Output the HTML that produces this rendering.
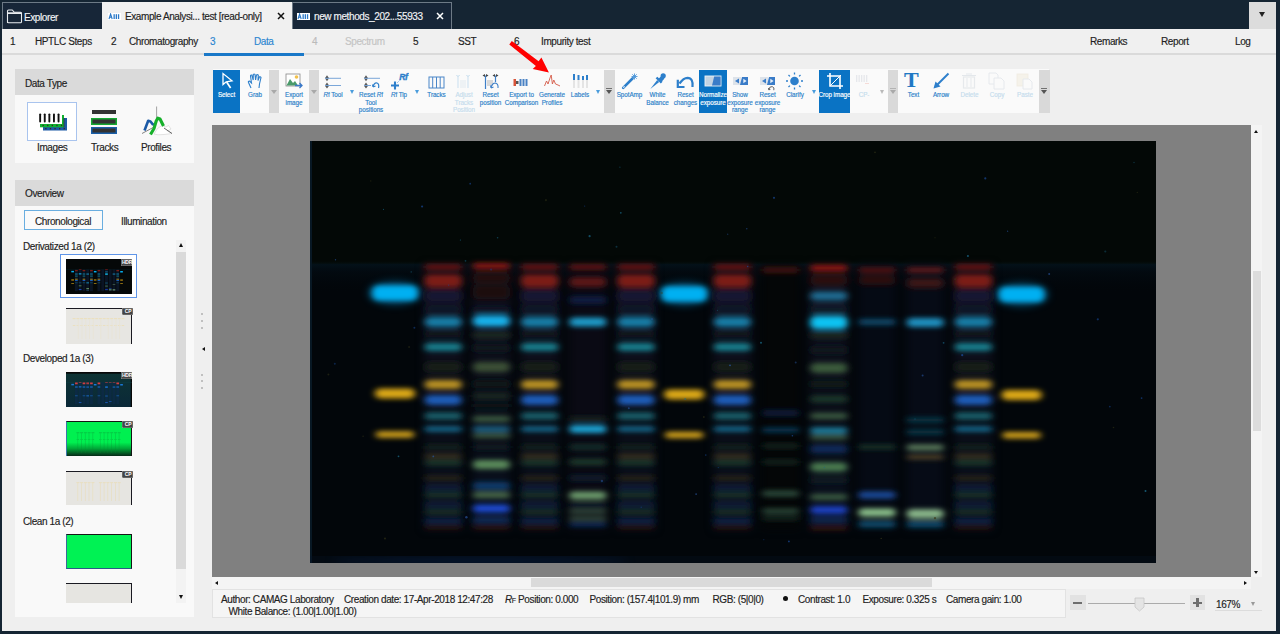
<!DOCTYPE html><html><head><meta charset="utf-8"><title>HPTLC</title><style>
*{margin:0;padding:0;box-sizing:border-box}
html,body{width:1280px;height:634px;overflow:hidden}
body{background:#152533;position:relative;font-family:"Liberation Sans",sans-serif;font-size:10px;color:#3a3a3a;letter-spacing:-0.4px;-webkit-text-stroke:0.15px}
.a{position:absolute;white-space:nowrap}
.tb{position:absolute;font-size:6.3px;line-height:7.5px;color:#2a7fc9;text-align:center;letter-spacing:-0.05px;white-space:nowrap}
.tb.w{color:#fff}
.tb.d{color:#c5dced}
.sep{position:absolute;top:70px;height:43px;width:10px;background:#d9d9d9}
.dd{position:absolute;width:0;height:0;border-left:2.6px solid transparent;border-right:2.6px solid transparent;border-top:4px solid #4a9cdc}
</style></head><body>
<div class="a" style="left:2px;top:2px;width:100px;height:27px;background:#172638;border-top:1px solid #6d7a86;border-left:1px solid #6d7a86"></div>
<svg class="a" style="left:6px;top:9px" width="17" height="15" viewBox="0 0 17 15"><path d="M1.5 13.5 V2 Q1.5 1 2.5 1 H6.3 L8.3 3.3 H14.5 Q15.5 3.3 15.5 4.3 V12.8 Q15.5 13.8 14.5 13.8 H2.5 Q1.5 13.8 1.5 12.8 Z" fill="none" stroke="#e8ecef" stroke-width="1.1" stroke-linejoin="round"/><rect x="1.5" y="3.3" width="14" height="1.7" fill="#e8ecef"/></svg>
<div class="a" style="left:24px;top:11.5px;color:#f2f4f6;font-size:10px">Explorer</div>
<div class="a" style="left:102px;top:2px;width:190px;height:27px;background:#f0f0f0"></div>
<svg class="a" style="left:108px;top:13px" width="13" height="7" viewBox="0 0 13 7"><rect width="13" height="7" fill="#fff"/><path d="M1 6 L2.6 1 L4.2 6 M1.7 4.3 H3.5" fill="none" stroke="#2a78c8" stroke-width="1.1"/><g fill="#2a78c8"><rect x="5.5" y="1.2" width="1.3" height="4.8"/><rect x="7.7" y="1.2" width="1.3" height="4.8"/><rect x="9.9" y="1.2" width="1.3" height="4.8"/></g></svg>
<div class="a" style="left:125px;top:11px;color:#222">Example Analysi... test [read-only]</div>
<svg class="a" style="left:277px;top:12px" width="8" height="8" viewBox="0 0 8 8"><path d="M1 1L7 7M7 1L1 7" stroke="#111" stroke-width="1.5"/></svg>
<div class="a" style="left:292px;top:2px;width:160px;height:27px;background:#172638;border:1px solid #6d7a86;border-bottom:none"></div>
<svg class="a" style="left:297px;top:12.5px" width="13" height="7" viewBox="0 0 13 7"><rect width="13" height="7" fill="#fff"/><path d="M1 6 L2.6 1 L4.2 6 M1.7 4.3 H3.5" fill="none" stroke="#2a78c8" stroke-width="1.1"/><g fill="#2a78c8"><rect x="5.5" y="1.2" width="1.3" height="4.8"/><rect x="7.7" y="1.2" width="1.3" height="4.8"/><rect x="9.9" y="1.2" width="1.3" height="4.8"/></g></svg>
<div class="a" style="left:314px;top:11px;color:#f2f4f6">new methods_202...55933</div>
<svg class="a" style="left:436px;top:12px" width="8" height="8" viewBox="0 0 8 8"><path d="M1 1L7 7M7 1L1 7" stroke="#fff" stroke-width="1.5"/></svg>
<div class="a" style="left:1249px;top:2px;width:27px;height:27px;background:#dcdcdc"></div>
<div class="a" style="left:1259px;top:12px;width:0;height:0;border-left:3px solid transparent;border-right:3px solid transparent;border-top:5px solid #222"></div>
<div class="a" style="left:2px;top:29px;width:1274px;height:602px;background:#efefef"></div>
<div class="a" style="left:2px;top:29px;width:1274px;height:25px;background:#f0f0f0"></div>
<div class="a" style="left:2px;top:53px;width:1274px;height:2px;background:#dadada"></div>
<div class="a" style="left:204px;top:53px;width:100px;height:3px;background:#1a78c8"></div>
<div class="a" style="left:10px;top:35.5px;color:#222">1</div>
<div class="a" style="left:35px;top:35.5px;color:#222">HPTLC Steps</div>
<div class="a" style="left:111px;top:35.5px;color:#222">2</div>
<div class="a" style="left:129px;top:35.5px;color:#222">Chromatography</div>
<div class="a" style="left:210px;top:35.5px;color:#2a86d0">3</div>
<div class="a" style="left:254px;top:35.5px;color:#2a86d0">Data</div>
<div class="a" style="left:312px;top:35.5px;color:#bbb">4</div>
<div class="a" style="left:345px;top:35.5px;color:#c4c4c4">Spectrum</div>
<div class="a" style="left:413px;top:35.5px;color:#222">5</div>
<div class="a" style="left:458px;top:35.5px;color:#222">SST</div>
<div class="a" style="left:514px;top:35.5px;color:#222">6</div>
<div class="a" style="left:541px;top:35.5px;color:#222">Impurity test</div>
<div class="a" style="left:1090px;top:35.5px;color:#222">Remarks</div>
<div class="a" style="left:1161px;top:35.5px;color:#222">Report</div>
<div class="a" style="left:1235px;top:35.5px;color:#222">Log</div>
<div class="a" style="left:15px;top:69px;width:179px;height:26px;background:#dadada"></div>
<div class="a" style="left:25px;top:77.5px;color:#222">Data Type</div>
<div class="a" style="left:15px;top:95px;width:179px;height:68px;background:#f9f9f9"></div>
<div class="a" style="left:27px;top:102px;width:50px;height:39px;background:#fff;border:1px solid #a9c4ee"></div>
<svg class="a" style="left:38px;top:110px" width="32" height="24" viewBox="0 0 32 24">
<rect x="5" y="8" width="24" height="12.5" fill="#1c5aa6"/>
<rect x="2" y="5" width="24" height="12.3" fill="#10b030"/>
<rect x="0" y="2" width="24" height="12" fill="#fff"/>
<rect x="25.6" y="8" width="0.8" height="9.5" fill="#333"/>
<g fill="#111"><rect x="1.2" y="3.4" width="1.9" height="9" rx="0.9"/><rect x="5.8" y="3.4" width="1.9" height="9" rx="0.9"/><rect x="10.4" y="3.4" width="1.9" height="9" rx="0.9"/><rect x="15" y="3.4" width="1.9" height="9" rx="0.9"/><rect x="19.6" y="3.4" width="1.9" height="9" rx="0.9"/></g>
<g fill="#3a2626"><rect x="4.5" y="14.8" width="1.3" height="1.3"/><rect x="9.1" y="14.8" width="1.3" height="1.3"/><rect x="13.7" y="14.8" width="1.3" height="1.3"/><rect x="18.3" y="14.8" width="1.3" height="1.3"/><rect x="22.9" y="14.8" width="1.3" height="1.3"/>
<rect x="7.2" y="18" width="1.3" height="1.3"/><rect x="11.8" y="18" width="1.3" height="1.3"/><rect x="16.4" y="18" width="1.3" height="1.3"/><rect x="21" y="18" width="1.3" height="1.3"/><rect x="25.6" y="18" width="1.3" height="1.3"/></g>
</svg>
<div class="a" style="left:37px;top:142px;color:#222">Images</div>
<svg class="a" style="left:90px;top:108px" width="30" height="28" viewBox="0 0 30 28">
<rect x="2" y="2" width="24" height="4" fill="#333"/>
<rect x="1" y="10" width="26" height="7" fill="#16a832"/><rect x="2.5" y="11.5" width="23" height="4" fill="#333"/>
<rect x="1" y="19" width="26" height="7" fill="#1a5fa8"/><rect x="2.5" y="20.5" width="23" height="4" fill="#333"/>
</svg>
<div class="a" style="left:91px;top:142px;color:#222">Tracks</div>
<svg class="a" style="left:140px;top:106px" width="34" height="32" viewBox="0 0 34 32">
<line x1="16.6" y1="0.5" x2="16.6" y2="17" stroke="#999" stroke-width="0.9"/>
<path d="M14 28 L17.5 22.5 L22 19.5 L26 21 L28.5 19.5 L31 23 L27.5 25 L32 27.5 L24 28.5 L18 28.8 Z" fill="#fff" stroke="#d0d0d0" stroke-width="0.6"/>
<line x1="2" y1="27.5" x2="15" y2="20.5" stroke="#666" stroke-width="0.8"/>
<line x1="24" y1="22" x2="32" y2="27.5" stroke="#555" stroke-width="0.9"/>
<path d="M4.5 24.5 L8.2 14.8 L10.5 15.5 L12.8 18.3 L15.5 18.8" fill="none" stroke="#1c5aa6" stroke-width="2.6" stroke-linejoin="round"/>
<path d="M10.5 28.5 L14 22.5 L16.2 15 L17.8 12.2 L20 13 L23.5 20" fill="none" stroke="#16b02a" stroke-width="3.1" stroke-linejoin="round"/>
</svg>
<div class="a" style="left:141px;top:142px;color:#222">Profiles</div>
<div class="a" style="left:15px;top:180px;width:179px;height:26px;background:#dadada"></div>
<div class="a" style="left:25px;top:187.5px;color:#222">Overview</div>
<div class="a" style="left:15px;top:206px;width:179px;height:411px;background:#f9f9f9"></div>
<div class="a" style="left:24px;top:210px;width:79px;height:20px;border:1px solid #6aaee0;background:#fafafa"></div>
<div class="a" style="left:35px;top:215.5px;color:#222">Chronological</div>
<div class="a" style="left:121px;top:215.5px;color:#222">Illumination</div>
<div class="a" style="left:176px;top:240px;width:10px;height:363px;background:#f3f3f3"></div>
<div class="a" style="left:176px;top:252px;width:10px;height:317px;background:#dadada"></div>
<div class="a" style="left:178.5px;top:243px;width:0;height:0;border-left:2.5px solid transparent;border-right:2.5px solid transparent;border-bottom:4px solid #111"></div>
<div class="a" style="left:178.5px;top:595px;width:0;height:0;border-left:2.5px solid transparent;border-right:2.5px solid transparent;border-top:4px solid #111"></div>
<div class="a" style="left:23px;top:240.5px;color:#222">Derivatized 1a (2)</div>
<div class="a" style="left:23px;top:353px;color:#222">Developed 1a (3)</div>
<div class="a" style="left:23px;top:516px;color:#222">Clean 1a (2)</div>
<div class="a" style="left:60px;top:254px;width:77px;height:44px;border:1.5px solid #5f95e8;background:#fff"></div>
<svg class="a" style="left:66px;top:259px" width="66" height="35" viewBox="310 141 846 422" preserveAspectRatio="none"><rect x="310" y="141" width="846" height="422" fill="#050808"/><rect x="424" y="265" width="38" height="264" fill="#0a1424"/><rect x="472" y="265" width="38" height="264" fill="#0a1424"/><rect x="521" y="265" width="38" height="264" fill="#0a1424"/><rect x="569" y="265" width="38" height="264" fill="#0a1424"/><rect x="617" y="265" width="38" height="264" fill="#0a1424"/><rect x="713" y="265" width="38" height="264" fill="#0a1424"/><rect x="762" y="265" width="38" height="264" fill="#0a1424"/><rect x="810" y="265" width="38" height="264" fill="#0a1424"/><rect x="858" y="265" width="38" height="264" fill="#0a1424"/><rect x="906" y="265" width="38" height="264" fill="#0a1424"/><rect x="954" y="265" width="38" height="264" fill="#0a1424"/><rect x="310" y="262" width="846" height="6" fill="#061a20"/><g><rect x="378" y="284" width="34" height="18" fill="#06b0f2"/><rect x="378" y="388" width="34" height="12" fill="#dca818"/><rect x="378" y="431" width="34" height="8" fill="#d0a01a"/><rect x="667" y="285" width="34" height="18" fill="#06b0f2"/><rect x="667" y="388" width="34" height="12" fill="#dca818"/><rect x="667" y="431" width="34" height="8" fill="#d0a01a"/><rect x="1005" y="286" width="34" height="18" fill="#06b0f2"/><rect x="1005" y="389" width="34" height="12" fill="#dca818"/><rect x="1005" y="431" width="34" height="8" fill="#d0a01a"/><rect x="426" y="273" width="34" height="16" fill="#7c1c14"/><rect x="426" y="316" width="34" height="12" fill="#137ca4"/><rect x="426" y="342" width="34" height="10" fill="#157e8c"/><rect x="426" y="379" width="34" height="11" fill="#b89020"/><rect x="426" y="394" width="34" height="12" fill="#1a5cb8"/><rect x="426" y="426" width="34" height="6" fill="#166e94"/><rect x="523" y="273" width="34" height="16" fill="#7c1c14"/><rect x="523" y="316" width="34" height="12" fill="#137ca4"/><rect x="523" y="342" width="34" height="10" fill="#157e8c"/><rect x="523" y="379" width="34" height="11" fill="#b89020"/><rect x="523" y="394" width="34" height="12" fill="#1a5cb8"/><rect x="523" y="426" width="34" height="6" fill="#166e94"/><rect x="619" y="273" width="34" height="16" fill="#7c1c14"/><rect x="619" y="316" width="34" height="12" fill="#137ca4"/><rect x="619" y="342" width="34" height="10" fill="#157e8c"/><rect x="619" y="379" width="34" height="11" fill="#b89020"/><rect x="619" y="394" width="34" height="12" fill="#1a5cb8"/><rect x="619" y="426" width="34" height="6" fill="#166e94"/><rect x="715" y="273" width="34" height="16" fill="#7c1c14"/><rect x="715" y="316" width="34" height="12" fill="#137ca4"/><rect x="715" y="342" width="34" height="10" fill="#157e8c"/><rect x="715" y="379" width="34" height="11" fill="#b89020"/><rect x="715" y="394" width="34" height="12" fill="#1a5cb8"/><rect x="715" y="426" width="34" height="6" fill="#166e94"/><rect x="956" y="273" width="34" height="16" fill="#7c1c14"/><rect x="956" y="316" width="34" height="12" fill="#137ca4"/><rect x="956" y="342" width="34" height="10" fill="#157e8c"/><rect x="956" y="379" width="34" height="11" fill="#b89020"/><rect x="956" y="394" width="34" height="12" fill="#1a5cb8"/><rect x="956" y="426" width="34" height="6" fill="#166e94"/><rect x="474" y="262" width="34" height="7" fill="#8a1410"/><rect x="474" y="314" width="34" height="13" fill="#16b0ea"/><rect x="474" y="426" width="34" height="6" fill="#1a6a90"/><rect x="474" y="459" width="34" height="11" fill="#5a8a5a"/><rect x="474" y="504" width="34" height="10" fill="#1a4ad0"/><rect x="571" y="317" width="34" height="11" fill="#1a9ac8"/><rect x="571" y="424" width="34" height="10" fill="#1aa0d0"/><rect x="571" y="491" width="34" height="10" fill="#6a9a6a"/><rect x="571" y="510" width="34" height="3" fill="#50785a"/><rect x="571" y="517" width="34" height="3" fill="#50785a"/><rect x="571" y="523" width="34" height="4" fill="#0a3a7a"/><rect x="812" y="264" width="34" height="7" fill="#921410"/><rect x="812" y="291" width="34" height="11" fill="#1a6a90"/><rect x="812" y="315" width="34" height="16" fill="#10c2f2"/><rect x="812" y="427" width="34" height="7" fill="#1a80a0"/><rect x="812" y="462" width="34" height="11" fill="#4a7a50"/><rect x="812" y="505" width="34" height="10" fill="#1a40c0"/><rect x="860" y="491" width="34" height="8" fill="#1a4a9a"/><rect x="860" y="508" width="34" height="10" fill="#8ac08a"/><rect x="908" y="317" width="34" height="11" fill="#1a90c0"/><rect x="908" y="444" width="34" height="7" fill="#5a7a5a"/><rect x="908" y="508" width="34" height="11" fill="#8ab88a"/></g></svg>
<svg class="a" style="left:121px;top:259px" width="11" height="7" viewBox="0 0 11 7"><path d="M1.5 0 H11 V7 H1.5 Q0 7 0 5.5 V1.5 Q0 0 1.5 0Z" fill="#444" stroke="#bbb" stroke-width="0.6"/><text x="6" y="5.3" font-family="Liberation Sans" font-weight="bold" font-size="5" fill="#fff" text-anchor="middle" letter-spacing="-0.2">HDR</text></svg>
<div class="a" style="left:66px;top:308px;width:66px;height:36px;background:#e7e6e2;border-top:1.5px solid #1a1a22;border-right:1.5px solid #1a1a22"></div>
<svg class="a" style="left:66px;top:308px" width="66" height="36" viewBox="0 0 66 36"><g fill="#ebe0c0"><rect x="6.6" y="10" width="3" height="1.2"/><rect x="6.8" y="17" width="2.5" height="1"/><rect x="10.4" y="10" width="3" height="1.2"/><rect x="10.6" y="17" width="2.5" height="1"/><rect x="14.1" y="10" width="3" height="1.2"/><rect x="14.3" y="17" width="2.5" height="1"/><rect x="17.9" y="10" width="3" height="1.2"/><rect x="18.1" y="17" width="2.5" height="1"/><rect x="21.6" y="10" width="3" height="1.2"/><rect x="21.8" y="17" width="2.5" height="1"/><rect x="25.4" y="10" width="3" height="1.2"/><rect x="25.6" y="17" width="2.5" height="1"/><rect x="29.2" y="10" width="3" height="1.2"/><rect x="29.4" y="17" width="2.5" height="1"/><rect x="32.9" y="10" width="3" height="1.2"/><rect x="33.1" y="17" width="2.5" height="1"/><rect x="36.7" y="10" width="3" height="1.2"/><rect x="36.9" y="17" width="2.5" height="1"/><rect x="40.4" y="10" width="3" height="1.2"/><rect x="40.6" y="17" width="2.5" height="1"/><rect x="44.2" y="10" width="3" height="1.2"/><rect x="44.4" y="17" width="2.5" height="1"/><rect x="48.0" y="10" width="3" height="1.2"/><rect x="48.2" y="17" width="2.5" height="1"/><rect x="51.7" y="10" width="3" height="1.2"/><rect x="51.9" y="17" width="2.5" height="1"/><rect x="55.5" y="10" width="3" height="1.2"/><rect x="55.7" y="17" width="2.5" height="1"/></g><g fill="#e8e4d8"><rect x="11.8" y="11" width="1" height="20"/><rect x="15.5" y="11" width="1" height="20"/><rect x="19.3" y="11" width="1" height="20"/><rect x="23.0" y="11" width="1" height="20"/><rect x="26.8" y="11" width="1" height="20"/><rect x="34.3" y="11" width="1" height="20"/><rect x="41.8" y="11" width="1" height="20"/><rect x="45.6" y="11" width="1" height="20"/><rect x="49.4" y="11" width="1" height="20"/><rect x="53.1" y="11" width="1" height="20"/></g></svg>
<svg class="a" style="left:122px;top:308px" width="11" height="7" viewBox="0 0 11 7"><path d="M1.5 0 H11 V7 H1.5 Q0 7 0 5.5 V1.5 Q0 0 1.5 0Z" fill="#444" stroke="#bbb" stroke-width="0.6"/><text x="6" y="5.3" font-family="Liberation Sans" font-weight="bold" font-size="5" fill="#fff" text-anchor="middle" letter-spacing="-0.2">CP</text></svg>
<svg class="a" style="left:66px;top:372px" width="66" height="35" viewBox="310 141 846 422" preserveAspectRatio="none"><defs><linearGradient id="dg" x1="0" y1="0" x2="0" y2="1"><stop offset="0" stop-color="#0e3434"/><stop offset="1" stop-color="#0a2838"/></linearGradient></defs><rect x="310" y="141" width="846" height="422" fill="url(#dg)"/><rect x="310" y="141" width="846" height="20" fill="#080808"/><rect x="1140" y="141" width="16" height="422" fill="#080808"/><rect x="310" y="262" width="846" height="5" fill="#0e4048"/><rect x="425" y="265" width="36" height="264" fill="#0c2a44"/><rect x="473" y="265" width="36" height="264" fill="#0c2a44"/><rect x="522" y="265" width="36" height="264" fill="#0c2a44"/><rect x="570" y="265" width="36" height="264" fill="#0c2a44"/><rect x="618" y="265" width="36" height="264" fill="#0c2a44"/><rect x="714" y="265" width="36" height="264" fill="#0c2a44"/><rect x="763" y="265" width="36" height="264" fill="#0c2a44"/><rect x="811" y="265" width="36" height="264" fill="#0c2a44"/><rect x="859" y="265" width="36" height="264" fill="#0c2a44"/><rect x="907" y="265" width="36" height="264" fill="#0c2a44"/><rect x="955" y="265" width="36" height="264" fill="#0c2a44"/><g><rect x="378" y="284" width="34" height="18" fill="#1a78d8"/><rect x="667" y="285" width="34" height="18" fill="#1a78d8"/><rect x="1005" y="286" width="34" height="18" fill="#1a78d8"/><rect x="426" y="264" width="34" height="6" fill="#d04040"/><rect x="426" y="273" width="34" height="16" fill="#d04040"/><rect x="426" y="316" width="34" height="12" fill="#1a78d8"/><rect x="426" y="426" width="34" height="6" fill="#1a78d8"/><rect x="523" y="264" width="34" height="6" fill="#d04040"/><rect x="523" y="273" width="34" height="16" fill="#d04040"/><rect x="523" y="316" width="34" height="12" fill="#1a78d8"/><rect x="523" y="426" width="34" height="6" fill="#1a78d8"/><rect x="619" y="264" width="34" height="6" fill="#d04040"/><rect x="619" y="273" width="34" height="16" fill="#d04040"/><rect x="619" y="316" width="34" height="12" fill="#1a78d8"/><rect x="619" y="426" width="34" height="6" fill="#1a78d8"/><rect x="715" y="264" width="34" height="6" fill="#d04040"/><rect x="715" y="273" width="34" height="16" fill="#d04040"/><rect x="715" y="316" width="34" height="12" fill="#1a78d8"/><rect x="715" y="426" width="34" height="6" fill="#1a78d8"/><rect x="956" y="264" width="34" height="6" fill="#d04040"/><rect x="956" y="273" width="34" height="16" fill="#d04040"/><rect x="956" y="316" width="34" height="12" fill="#1a78d8"/><rect x="956" y="426" width="34" height="6" fill="#1a78d8"/><rect x="474" y="262" width="34" height="7" fill="#d04040"/><rect x="474" y="314" width="34" height="13" fill="#1a78d8"/><rect x="474" y="504" width="34" height="10" fill="#1a5ab8"/><rect x="571" y="264" width="34" height="6" fill="#d04040"/><rect x="571" y="276" width="34" height="12" fill="#d04040"/><rect x="571" y="317" width="34" height="11" fill="#1a78d8"/><rect x="571" y="424" width="34" height="10" fill="#1a78d8"/><rect x="812" y="264" width="34" height="7" fill="#d04040"/><rect x="812" y="315" width="34" height="16" fill="#1a78d8"/><rect x="812" y="427" width="34" height="7" fill="#1a78d8"/><rect x="812" y="505" width="34" height="10" fill="#1a5ab8"/><rect x="860" y="267" width="34" height="6" fill="#d04040"/><rect x="860" y="491" width="34" height="8" fill="#1a5ab8"/><rect x="908" y="267" width="34" height="6" fill="#d04040"/><rect x="908" y="317" width="34" height="11" fill="#1a78d8"/></g></svg>
<svg class="a" style="left:121px;top:372px" width="11" height="7" viewBox="0 0 11 7"><path d="M1.5 0 H11 V7 H1.5 Q0 7 0 5.5 V1.5 Q0 0 1.5 0Z" fill="#444" stroke="#bbb" stroke-width="0.6"/><text x="6" y="5.3" font-family="Liberation Sans" font-weight="bold" font-size="5" fill="#fff" text-anchor="middle" letter-spacing="-0.2">HDR</text></svg>
<div class="a" style="left:66px;top:421px;width:66px;height:35px;background:linear-gradient(#00f050 0%,#00f050 60%,#00a838 78%,#062a18 100%);border-top:1.5px solid #151515;border-right:1px solid #151515;border-left:1px solid #3a78a8"></div>
<svg class="a" style="left:66px;top:421px" width="66" height="35" viewBox="0 0 66 35"><g fill="#0a8a30" opacity="0.3"><rect x="10.4" y="11" width="3" height="1.3"/><rect x="10.6" y="18" width="2.5" height="1"/><rect x="11.4" y="12" width="0.8" height="20"/><rect x="14.1" y="11" width="3" height="1.3"/><rect x="14.3" y="18" width="2.5" height="1"/><rect x="15.1" y="12" width="0.8" height="20"/><rect x="17.9" y="11" width="3" height="1.3"/><rect x="18.1" y="18" width="2.5" height="1"/><rect x="18.9" y="12" width="0.8" height="20"/><rect x="21.6" y="11" width="3" height="1.3"/><rect x="21.8" y="18" width="2.5" height="1"/><rect x="22.6" y="12" width="0.8" height="20"/><rect x="25.4" y="11" width="3" height="1.3"/><rect x="25.6" y="18" width="2.5" height="1"/><rect x="26.4" y="12" width="0.8" height="20"/><rect x="32.9" y="11" width="3" height="1.3"/><rect x="33.1" y="18" width="2.5" height="1"/><rect x="33.9" y="12" width="0.8" height="20"/><rect x="36.7" y="11" width="3" height="1.3"/><rect x="36.9" y="18" width="2.5" height="1"/><rect x="37.7" y="12" width="0.8" height="20"/><rect x="40.4" y="11" width="3" height="1.3"/><rect x="40.6" y="18" width="2.5" height="1"/><rect x="41.4" y="12" width="0.8" height="20"/><rect x="44.2" y="11" width="3" height="1.3"/><rect x="44.4" y="18" width="2.5" height="1"/><rect x="45.2" y="12" width="0.8" height="20"/><rect x="48.0" y="11" width="3" height="1.3"/><rect x="48.2" y="18" width="2.5" height="1"/><rect x="49.0" y="12" width="0.8" height="20"/><rect x="51.7" y="11" width="3" height="1.3"/><rect x="51.9" y="18" width="2.5" height="1"/><rect x="52.7" y="12" width="0.8" height="20"/></g></svg>
<svg class="a" style="left:122px;top:421px" width="11" height="7" viewBox="0 0 11 7"><path d="M1.5 0 H11 V7 H1.5 Q0 7 0 5.5 V1.5 Q0 0 1.5 0Z" fill="#444" stroke="#bbb" stroke-width="0.6"/><text x="6" y="5.3" font-family="Liberation Sans" font-weight="bold" font-size="5" fill="#fff" text-anchor="middle" letter-spacing="-0.2">CP</text></svg>
<div class="a" style="left:66px;top:471px;width:66px;height:34px;background:#e6e5e1;border-top:1.5px solid #1a1a22;border-right:1.5px solid #1a1a22"></div>
<svg class="a" style="left:66px;top:471px" width="66" height="34" viewBox="0 0 66 34"><g fill="#e8dfc4"><rect x="10.4" y="11" width="3" height="1.2"/><rect x="11.4" y="12" width="0.8" height="18"/><rect x="14.1" y="11" width="3" height="1.2"/><rect x="15.1" y="12" width="0.8" height="18"/><rect x="17.9" y="11" width="3" height="1.2"/><rect x="18.9" y="12" width="0.8" height="18"/><rect x="21.6" y="11" width="3" height="1.2"/><rect x="22.6" y="12" width="0.8" height="18"/><rect x="25.4" y="11" width="3" height="1.2"/><rect x="26.4" y="12" width="0.8" height="18"/><rect x="32.9" y="11" width="3" height="1.2"/><rect x="33.9" y="12" width="0.8" height="18"/><rect x="36.7" y="11" width="3" height="1.2"/><rect x="37.7" y="12" width="0.8" height="18"/><rect x="40.4" y="11" width="3" height="1.2"/><rect x="41.4" y="12" width="0.8" height="18"/><rect x="44.2" y="11" width="3" height="1.2"/><rect x="45.2" y="12" width="0.8" height="18"/><rect x="48.0" y="11" width="3" height="1.2"/><rect x="49.0" y="12" width="0.8" height="18"/><rect x="51.7" y="11" width="3" height="1.2"/><rect x="52.7" y="12" width="0.8" height="18"/></g></svg>
<svg class="a" style="left:122px;top:471px" width="11" height="7" viewBox="0 0 11 7"><path d="M1.5 0 H11 V7 H1.5 Q0 7 0 5.5 V1.5 Q0 0 1.5 0Z" fill="#444" stroke="#bbb" stroke-width="0.6"/><text x="6" y="5.3" font-family="Liberation Sans" font-weight="bold" font-size="5" fill="#fff" text-anchor="middle" letter-spacing="-0.2">CP</text></svg>
<div class="a" style="left:66px;top:534px;width:66px;height:35px;background:#00f254;border:1.5px solid #161616;border-left:1px solid #3a6a98;border-bottom:1px solid #2a5a88"></div>
<div class="a" style="left:66px;top:583px;width:66px;height:20px;background:#e6e5e1;border-top:1.5px solid #1a1a22;border-right:1.5px solid #1a1a22"></div>
<div class="a" style="left:213px;top:69px;width:836px;height:44px;background:#fafafa"></div>
<div class="a" style="left:213px;top:70px;width:27px;height:43px;background:#0a73c4"></div>
<div class="a" style="left:699px;top:70px;width:28px;height:43px;background:#0a73c4"></div>
<div class="a" style="left:819px;top:70px;width:31px;height:43px;background:#0a73c4"></div>
<div class="sep" style="left:269px;width:10px"></div>
<div class="sep" style="left:309px;width:10px"></div>
<div class="sep" style="left:604px;width:11px"></div>
<div class="sep" style="left:888px;width:10px"></div>
<div class="sep" style="left:1039px;width:10.5px"></div>
<div class="a" style="left:271px;top:89.5px;width:0;height:0;border-left:3px solid transparent;border-right:3px solid transparent;border-top:4px solid #a9a9a9"></div>
<div class="a" style="left:311px;top:89.5px;width:0;height:0;border-left:3px solid transparent;border-right:3px solid transparent;border-top:4px solid #a9a9a9"></div>
<div class="a" style="left:606px;top:88px;width:6px;height:1px;background:#555;opacity:0.8"></div>
<div class="a" style="left:606px;top:89.5px;width:0;height:0;border-left:3px solid transparent;border-right:3px solid transparent;border-top:4px solid #555"></div>
<div class="a" style="left:890px;top:88px;width:6px;height:1px;background:#a9a9a9;opacity:0.8"></div>
<div class="a" style="left:890px;top:89.5px;width:0;height:0;border-left:3px solid transparent;border-right:3px solid transparent;border-top:4px solid #a9a9a9"></div>
<div class="a" style="left:1041px;top:88px;width:6px;height:1px;background:#555;opacity:0.8"></div>
<div class="a" style="left:1041px;top:89.5px;width:0;height:0;border-left:3px solid transparent;border-right:3px solid transparent;border-top:4px solid #555"></div>
<div class="dd" style="left:350px;top:90px"></div>
<div class="dd" style="left:415px;top:90px"></div>
<div class="dd" style="left:596px;top:90px"></div>
<div class="dd" style="left:812px;top:90px"></div>
<div class="dd" style="left:880px;top:90px;border-top-color:#b9b9b9"></div>
<div class="tb w" style="left:204.5px;top:91px;width:44px">Select</div>
<div class="tb " style="left:233.0px;top:91px;width:44px">Grab</div>
<div class="tb " style="left:272.0px;top:91px;width:44px">Export<br>image</div>
<div class="tb " style="left:311.0px;top:91px;width:44px"><i>R</i>f Tool</div>
<div class="tb " style="left:349.0px;top:91px;width:44px">Reset <i>R</i>f<br>Tool<br>positions</div>
<div class="tb " style="left:377.0px;top:91px;width:44px"><i>R</i>f Tip</div>
<div class="tb " style="left:414.5px;top:91px;width:44px">Tracks</div>
<div class="tb d" style="left:442.0px;top:91px;width:44px">Adjust<br>Tracks<br>Position</div>
<div class="tb " style="left:468.5px;top:91px;width:44px">Reset<br>position</div>
<div class="tb " style="left:499.5px;top:91px;width:44px">Export to<br>Comparison</div>
<div class="tb " style="left:530.0px;top:91px;width:44px">Generate<br>Profiles</div>
<div class="tb " style="left:558.0px;top:91px;width:44px">Labels</div>
<div class="tb " style="left:607.5px;top:91px;width:44px">SpotAmp</div>
<div class="tb " style="left:635.5px;top:91px;width:44px">White<br>Balance</div>
<div class="tb " style="left:663.5px;top:91px;width:44px">Reset<br>changes</div>
<div class="tb w" style="left:691.0px;top:91px;width:44px">Normalize<br>exposure</div>
<div class="tb " style="left:718.0px;top:91px;width:44px">Show<br>exposure<br>range</div>
<div class="tb " style="left:745.5px;top:91px;width:44px">Reset<br>exposure<br>range</div>
<div class="tb " style="left:773.0px;top:91px;width:44px">Clarify</div>
<div class="tb w" style="left:812.5px;top:91px;width:44px">Crop image</div>
<div class="tb d" style="left:842.0px;top:91px;width:44px">CP-</div>
<div class="tb " style="left:891.5px;top:91px;width:44px">Text</div>
<div class="tb " style="left:919.0px;top:91px;width:44px">Arrow</div>
<div class="tb d" style="left:947.5px;top:91px;width:44px">Delete</div>
<div class="tb d" style="left:975.0px;top:91px;width:44px">Copy</div>
<div class="tb d" style="left:1003.0px;top:91px;width:44px">Paste</div>
<svg class="a" style="left:221px;top:72px" width="14" height="18" viewBox="0 0 14 18"><path d="M2 1.5 L2 12.6 L5.2 9.8 L11 8.8 Z" fill="none" stroke="#fff" stroke-width="1.3" stroke-linejoin="miter"/><path d="M5.6 10 L9.6 16" stroke="#fff" stroke-width="1.7"/></svg>
<svg class="a" style="left:247px;top:73px" width="16" height="16" viewBox="0 0 16 16"><path d="M4 15 L1.5 9.5 Q1 8 2.5 8 L4.5 10 L3.5 3 Q3.5 1.8 4.8 2 L6.2 7 L6.3 1.5 Q7 0.5 8 1.5 L8.6 7 L9.5 2 Q10.5 1.2 11.3 2.2 L11 7.5 L12.5 3.8 Q13.6 3.4 14 4.5 L12.5 11 L12 15" fill="none" stroke="#2d7fcb" stroke-width="1.1"/></svg>
<svg class="a" style="left:285px;top:73px" width="19" height="16" viewBox="0 0 19 16"><rect x="1" y="1" width="14" height="12" fill="#fff" stroke="#888" stroke-width="0.8"/><circle cx="11.5" cy="4" r="1.8" fill="#f2c14a"/><path d="M1.5 12.5 L5 6 L8 10 L10 8 L13 12.5 Z" fill="#4a9a6a"/><path d="M10 12.5 H17 M14.5 10 L17 12.5 L14.5 15" fill="none" stroke="#3a78c8" stroke-width="1.3"/></svg>
<svg class="a" style="left:324px;top:75px" width="18" height="15" viewBox="0 0 18 15"><g fill="#5a5a5a"><path d="M3 0.3 L4.9 3 H1.1 Z M3 6.3 L4.9 3.6 H1.1 Z M3 7.6 L4.9 10.3 H1.1 Z M3 13.6 L4.9 10.9 H1.1 Z"/></g><path d="M1 3.3 H17 M1 10.5 H17" stroke="#5a92d0" stroke-width="0.8"/></svg>
<svg class="a" style="left:363px;top:75px" width="18" height="15" viewBox="0 0 18 15"><g fill="#5a5a5a"><path d="M3 0.3 L4.9 3 H1.1 Z M3 6.3 L4.9 3.6 H1.1 Z M3 7.6 L4.9 10.3 H1.1 Z M3 13.6 L4.9 10.9 H1.1 Z"/></g><path d="M1 3.3 H17 M1 10.5 H8" stroke="#5a92d0" stroke-width="0.8"/><path d="M10 12 Q11 7.5 14 8 Q16.5 9 15.5 13 M10 12 L9.5 9.5 M10 12 L12.5 11" fill="none" stroke="#2d7fcb" stroke-width="1.2"/></svg>
<svg class="a" style="left:390px;top:72px" width="19" height="18" viewBox="0 0 19 18"><path d="M1 13.5 H9 M5 9.5 V17.5" stroke="#2d7fcb" stroke-width="2.1"/><path d="M7 11 L10.5 7.5" stroke="#5a9ad8" stroke-width="0.8" stroke-dasharray="1,1"/><text x="9.3" y="8" font-family="Liberation Sans" font-style="italic" font-weight="bold" font-size="8.5" fill="#2d7fcb" stroke="#2d7fcb" stroke-width="0.4">Rf</text></svg>
<svg class="a" style="left:428px;top:76px" width="17" height="13" viewBox="0 0 17 13"><rect x="1" y="1" width="15" height="11" fill="none" stroke="#4a86c8" stroke-width="1"/><path d="M4.7 1 V12 M8.5 1 V12 M12.2 1 V12" stroke="#4a86c8" stroke-width="1"/></svg>
<svg class="a" style="left:454px;top:73px" width="18" height="16" viewBox="0 0 18 16"><path d="M4 2 V15 M14 2 V15" stroke="#c9dff0" stroke-width="1"/><path d="M2 2 L4 4 L6 2 M12 2 L14 4 L16 2" stroke="#d0e2ef" fill="none" stroke-width="0.8"/><rect x="6" y="7" width="6" height="8" fill="#eef2f5"/></svg>
<svg class="a" style="left:482px;top:73px" width="19" height="17" viewBox="0 0 19 17"><path d="M0.5 2.5 L3 1 V4 Z M6.5 2.5 L4 1 V4 Z M10.5 2.5 L13 1 V4 Z M16.5 2.5 L14 1 V4 Z" fill="#444"/><path d="M3.5 2.5 V16 M13.5 2.5 V9" stroke="#3d7fc8" stroke-width="1.2"/><rect x="5" y="7" width="6" height="6" fill="#d8d8d8"/><path d="M9 15 Q10 10 13.5 10 Q16.5 11 16 15 M9 15 L8.5 12.5 M9 15 L11.5 14" fill="none" stroke="#3d7fc8" stroke-width="1.1"/></svg>
<svg class="a" style="left:513px;top:78px" width="16" height="9" viewBox="0 0 16 9"><rect x="0.5" y="1" width="2.5" height="7" fill="#d8553a"/><rect x="3" y="3" width="2.5" height="3" fill="#555"/><g fill="#4a82c4"><rect x="6.5" y="1" width="2" height="7"/><rect x="9.5" y="1" width="2" height="7"/><rect x="12.5" y="1" width="2" height="7"/></g></svg>
<svg class="a" style="left:544px;top:74px" width="17" height="13" viewBox="0 0 17 13"><path d="M0.5 12 L2.5 7 L4 10 L6 4 L7.2 1 L8.4 10 L9.8 6 L11.5 10 L14 11 L16 12" fill="none" stroke="#d55a47" stroke-width="0.9"/></svg>
<svg class="a" style="left:572px;top:73px" width="17" height="15" viewBox="0 0 17 15"><g fill="#e4e4e4"><rect x="1" y="6" width="2" height="9"/><rect x="5.5" y="6" width="2" height="9"/><rect x="10" y="6" width="2" height="9"/><rect x="14" y="6" width="2" height="9"/></g><g fill="#2d7fcb"><rect x="1" y="1" width="2" height="6"/><rect x="5.5" y="2" width="2" height="5"/><rect x="10" y="3" width="2" height="4"/><rect x="14" y="2" width="2" height="5"/></g></svg>
<svg class="a" style="left:621px;top:72px" width="18" height="18" viewBox="0 0 18 18"><path d="M2.2 15.8 L11.5 6.5" stroke="#2d7fcb" stroke-width="2.6" stroke-linecap="round"/><path d="M2.3 15.7 L3.6 14.4" stroke="#e8f2fb" stroke-width="1.2"/><g stroke="#4a94d8" stroke-width="0.9"><path d="M13.5 1.5 V7.5 M10.5 4.5 H16.5 M11.3 2.3 L15.7 6.7 M15.7 2.3 L11.3 6.7"/></g></svg>
<svg class="a" style="left:649px;top:72px" width="18" height="18" viewBox="0 0 18 18"><path d="M1.3 17 L8.2 8 L10.2 10 Z" fill="#2d7fcb"/><path d="M7.5 5.5 L12.7 10.7" stroke="#2d7fcb" stroke-width="2.4"/><path d="M9.8 6.5 L13 3.3 Q14.5 1.8 16 3.3 L14.7 4.5 Q16.2 6 14.7 7.5 L11.5 10.7 Z" fill="#2d7fcb"/><circle cx="14.2" cy="3.8" r="2.6" fill="#2d7fcb"/></svg>
<svg class="a" style="left:676px;top:75px" width="19" height="14" viewBox="0 0 19 14"><path d="M16.5 12 Q17.5 3 11.5 2.8 Q7.5 2.8 3.5 8.5" fill="none" stroke="#2d7fcb" stroke-width="2.2"/><path d="M1.8 4.8 V12 H8.5" fill="none" stroke="#2d7fcb" stroke-width="2.2"/></svg>
<svg class="a" style="left:704px;top:75px" width="18" height="12" viewBox="0 0 18 12"><rect x="1" y="1" width="16" height="10" fill="#c3d3e2" stroke="#eef3f8" stroke-width="0.9"/><path d="M10.2 1.4 L16.6 1.4 L16.6 10.6 L8 10.6 Z" fill="#3a7cc8"/></svg>
<svg class="a" style="left:732px;top:76px" width="17" height="10" viewBox="0 0 17 10"><rect x="1" y="1" width="8" height="8" fill="#dde3ea"/><path d="M3 5 L7 2.6 V7.4 Z" fill="#3a7cc8"/><path d="M10 1 H16 V9 H8 Z" fill="#3a7cc8"/><path d="M11.3 2.8 L14.6 5 L11.3 7.2 Z" fill="#e4eef8"/></svg>
<svg class="a" style="left:759px;top:76px" width="18" height="15" viewBox="0 0 18 15"><rect x="1" y="1" width="8" height="8" fill="#dde3ea"/><path d="M3 5 L7 2.6 V7.4 Z" fill="#3a7cc8"/><path d="M10 1 H16 V9 H8 Z" fill="#3a7cc8"/><path d="M11.3 2.8 L14.6 5 L11.3 7.2 Z" fill="#e4eef8"/><path d="M9.8 13.8 Q10.3 10.2 13.2 10.6 Q15.8 11.4 14.8 14.2" fill="none" stroke="#555" stroke-width="0.9"/><path d="M9.8 13.8 L9.5 12 M9.8 13.8 L11.4 13.4" stroke="#555" stroke-width="0.9"/></svg>
<svg class="a" style="left:785px;top:72px" width="19" height="18" viewBox="0 0 19 18"><circle cx="9.5" cy="9" r="4.3" fill="#2d7fcb"/><g stroke="#2d7fcb" stroke-width="1.3"><path d="M9.5 0.5V2.5M9.5 15.5V17.5M1 9H3M16 9H18M3.5 3L4.9 4.4M14.1 13.6L15.5 15M3.5 15L4.9 13.6M14.1 4.4L15.5 3"/></g></svg>
<svg class="a" style="left:826px;top:72px" width="18" height="18" viewBox="0 0 18 18"><path d="M4 1 V14 H17 M1 4 H14 V17" fill="none" stroke="#fff" stroke-width="1.6"/><path d="M4 14 L15 3" stroke="#fff" stroke-width="1"/></svg>
<svg class="a" style="left:855px;top:75px" width="16" height="9" viewBox="0 0 16 9"><g fill="#e6e8ec"><rect x="1" y="0" width="1.3" height="7"/><rect x="3.5" y="0" width="1.3" height="7"/><rect x="6" y="0" width="1.3" height="7"/><rect x="8.5" y="0" width="1.3" height="7"/><rect x="11" y="0" width="1.3" height="7"/></g><path d="M10 8.5 H14" stroke="#f2c6c0" stroke-width="0.6"/></svg>
<div class="a" style="left:904px;top:69px;font-family:'Liberation Serif',serif;font-weight:bold;font-size:22px;line-height:22px;color:#1f78c4;letter-spacing:0">T</div>
<svg class="a" style="left:932px;top:72px" width="18" height="18" viewBox="0 0 18 18"><path d="M16.5 1.5 L4 14" stroke="#2d7fcb" stroke-width="2"/><path d="M1.5 16.5 L3.5 9.5 L8.5 14.5 Z" fill="#2d7fcb"/></svg>
<svg class="a" style="left:961px;top:73px" width="16" height="16" viewBox="0 0 16 16"><path d="M1 2.5 H15 M5 1 H11" stroke="#e3e7eb" stroke-width="1.2"/><rect x="2.5" y="4" width="11" height="11" fill="none" stroke="#e6e9ec" stroke-width="1.2"/><path d="M6 5 V14 M10 5 V14" stroke="#e6e9ec" stroke-width="1"/></svg>
<svg class="a" style="left:988px;top:72px" width="18" height="18" viewBox="0 0 18 18"><path d="M1 1 H8 L10 3 V12 H1 Z" fill="none" stroke="#e4e8ec" stroke-width="0.9"/><path d="M6 6 H13 L16 9 V17 H6 Z" fill="#fafafa" stroke="#e4e8ec" stroke-width="0.9"/></svg>
<svg class="a" style="left:1016px;top:72px" width="18" height="18" viewBox="0 0 18 18"><rect x="1" y="2" width="11" height="12" fill="#f5f2ea" stroke="#f0ece2" stroke-width="0.8"/><path d="M7 7 H13 L16 10 V17 H7 Z" fill="#fafafa" stroke="#e4e8ec" stroke-width="0.9"/></svg>
<svg class="a" style="left:500px;top:30px" width="60" height="50" viewBox="500 30 60 50"><polygon points="511.8,41 538.6,61.2 541.4,57.6 548.9,72.6 532.7,69 535.9,65.9 509.3,44.4" fill="#ff0000"/></svg>
<div class="a" style="left:201px;top:313px;width:2px;height:2px;border-radius:1px;background:#b0b0b0"></div>
<div class="a" style="left:201px;top:320px;width:2px;height:2px;border-radius:1px;background:#b0b0b0"></div>
<div class="a" style="left:201px;top:327px;width:2px;height:2px;border-radius:1px;background:#b0b0b0"></div>
<div class="a" style="left:201px;top:374px;width:2px;height:2px;border-radius:1px;background:#b0b0b0"></div>
<div class="a" style="left:201px;top:380px;width:2px;height:2px;border-radius:1px;background:#b0b0b0"></div>
<div class="a" style="left:201px;top:387px;width:2px;height:2px;border-radius:1px;background:#b0b0b0"></div>
<div class="a" style="left:202px;top:347px;width:0;height:0;border-top:2.5px solid transparent;border-bottom:2.5px solid transparent;border-right:3px solid #111"></div>
<div class="a" style="left:212px;top:125px;width:1039px;height:452px;background:#808080"></div>
<svg class="a" style="left:310px;top:141px" width="846" height="422" viewBox="310 141 846 422">
<defs><filter id="bl" x="-20%" y="-100%" width="140%" height="300%"><feGaussianBlur stdDeviation="3.6 2.5"/></filter><linearGradient id="colg" x1="0" y1="0" x2="0" y2="1"><stop offset="0" stop-color="#160c12"/><stop offset="0.15" stop-color="#10101e"/><stop offset="0.6" stop-color="#0a0e18"/><stop offset="1" stop-color="#08101e"/></linearGradient><filter id="glw" x="-50%" y="-100%" width="200%" height="300%"><feGaussianBlur stdDeviation="5 4"/></filter><filter id="bls" x="-30%" y="-100%" width="160%" height="300%"><feGaussianBlur stdDeviation="3.2 2.8"/></filter><filter color-interpolation-filters="sRGB" id="bl2" x="-20%" y="-20%" width="140%" height="140%"><feGaussianBlur stdDeviation="4"/></filter></defs>
<rect x="310" y="141" width="846" height="422" fill="#030806"/>
<rect x="310" y="264" width="846" height="299" fill="#02060a"/>
<defs><linearGradient id="fr" x1="0" y1="0" x2="0" y2="1"><stop offset="0" stop-color="#041418" stop-opacity="0"/><stop offset="0.12" stop-color="#06202c" stop-opacity="0.9"/><stop offset="0.35" stop-color="#041420" stop-opacity="0.6"/><stop offset="1" stop-color="#020a10" stop-opacity="0"/></linearGradient></defs><rect x="310" y="261" width="846" height="30" fill="url(#fr)" opacity="0.48"/><rect x="310" y="141" width="2" height="422" fill="#081824"/>
<g filter="url(#bl2)">
<rect x="424.2" y="265" width="38" height="264" fill="url(#colg)"/>
<rect x="472.4" y="265" width="38" height="264" fill="url(#colg)"/>
<rect x="520.6" y="265" width="38" height="264" fill="url(#colg)"/>
<rect x="568.8" y="265" width="38" height="264" fill="#0a0a14"/>
<rect x="617.0" y="265" width="38" height="264" fill="url(#colg)"/>
<rect x="713.4" y="265" width="38" height="264" fill="url(#colg)"/>
<rect x="761.6" y="265" width="38" height="264" fill="#040607"/>
<rect x="809.8" y="265" width="38" height="264" fill="url(#colg)"/>
<rect x="858.0" y="265" width="38" height="264" fill="#050a14"/>
<rect x="906.2" y="265" width="38" height="264" fill="#060b16"/>
<rect x="954.4" y="265" width="38" height="264" fill="url(#colg)"/>
</g>
<g filter="url(#glw)" opacity="0.5">
<ellipse cx="395.0" cy="293.0" rx="26" ry="11" fill="#0a90d0"/>
<ellipse cx="684.2" cy="293.9" rx="26" ry="11" fill="#0a90d0"/>
<ellipse cx="1021.6" cy="294.5" rx="26" ry="11" fill="#0a90d0"/>
</g>
<g filter="url(#bls)">
<rect x="372.5" y="285.5" width="45" height="15.0" rx="6.0" fill="#06b0f2"/>
<rect x="661.7" y="286.4" width="45" height="15.0" rx="6.0" fill="#06b0f2"/>
<rect x="999.1" y="287.0" width="45" height="15.0" rx="6.0" fill="#06b0f2"/>
</g>
<g filter="url(#bl)">
<rect x="375.0" y="388.5" width="40" height="10.0" rx="5.0" fill="#dca818"/>
<rect x="376.0" y="431.2" width="38" height="6.5" rx="3.2" fill="#d0a01a"/>
<rect x="664.2" y="389.4" width="40" height="10.0" rx="5.0" fill="#dca818"/>
<rect x="665.2" y="431.7" width="38" height="6.5" rx="3.2" fill="#d0a01a"/>
<rect x="1001.6" y="390.0" width="40" height="10.0" rx="5.0" fill="#dca818"/>
<rect x="1002.6" y="432.0" width="38" height="6.5" rx="3.2" fill="#d0a01a"/>
<rect x="424.7" y="264.5" width="37" height="5.0" rx="2.5" fill="#701812"/>
<rect x="424.7" y="274.5" width="37" height="13.0" rx="5.0" fill="#7c1c14"/>
<rect x="424.7" y="290.0" width="37" height="12.0" rx="5.0" fill="#141430"/>
<rect x="424.7" y="304.0" width="37" height="10.0" rx="5.0" fill="#0c1228"/>
<rect x="424.7" y="317.0" width="37" height="10.0" rx="5.0" fill="#137ca4"/>
<rect x="424.7" y="331.0" width="37" height="6.0" rx="3.0" fill="#0c161e"/>
<rect x="424.7" y="343.0" width="37" height="8.0" rx="4.0" fill="#157e8c"/>
<rect x="424.7" y="362.0" width="37" height="10.0" rx="5.0" fill="#141e18"/>
<rect x="424.7" y="380.0" width="37" height="9.0" rx="4.5" fill="#b89020"/>
<rect x="424.7" y="395.0" width="37" height="10.0" rx="5.0" fill="#1a5cb8"/>
<rect x="424.7" y="412.5" width="37" height="7.0" rx="3.5" fill="#13606c"/>
<rect x="424.7" y="426.5" width="37" height="5.0" rx="2.5" fill="#166e94"/>
<rect x="424.7" y="445.0" width="37" height="4.0" rx="2.0" fill="#12261e"/>
<rect x="424.7" y="454.5" width="37" height="3.0" rx="1.5" fill="#50401e"/>
<rect x="424.7" y="460.0" width="37" height="5.0" rx="2.5" fill="#1e3a2c"/>
<rect x="424.7" y="476.0" width="37" height="4.0" rx="2.0" fill="#2e2818"/>
<rect x="424.7" y="484.5" width="37" height="7.0" rx="3.5" fill="#081a36"/>
<rect x="424.7" y="493.0" width="37" height="4.0" rx="2.0" fill="#1e3a2c"/>
<rect x="424.7" y="501.5" width="37" height="7.0" rx="3.5" fill="#081a34"/>
<rect x="424.7" y="510.0" width="37" height="4.0" rx="2.0" fill="#1a3426"/>
<rect x="424.7" y="518.5" width="37" height="5.0" rx="2.5" fill="#082048"/>
<rect x="424.7" y="526.0" width="37" height="3.0" rx="1.5" fill="#301210"/>
<rect x="521.1" y="264.5" width="37" height="5.0" rx="2.5" fill="#701812"/>
<rect x="521.1" y="274.5" width="37" height="13.0" rx="5.0" fill="#7c1c14"/>
<rect x="521.1" y="290.0" width="37" height="12.0" rx="5.0" fill="#141430"/>
<rect x="521.1" y="304.0" width="37" height="10.0" rx="5.0" fill="#0c1228"/>
<rect x="521.1" y="317.0" width="37" height="10.0" rx="5.0" fill="#137ca4"/>
<rect x="521.1" y="331.0" width="37" height="6.0" rx="3.0" fill="#0c161e"/>
<rect x="521.1" y="343.0" width="37" height="8.0" rx="4.0" fill="#157e8c"/>
<rect x="521.1" y="362.0" width="37" height="10.0" rx="5.0" fill="#141e18"/>
<rect x="521.1" y="380.0" width="37" height="9.0" rx="4.5" fill="#b89020"/>
<rect x="521.1" y="395.0" width="37" height="10.0" rx="5.0" fill="#1a5cb8"/>
<rect x="521.1" y="412.5" width="37" height="7.0" rx="3.5" fill="#13606c"/>
<rect x="521.1" y="426.5" width="37" height="5.0" rx="2.5" fill="#166e94"/>
<rect x="521.1" y="445.0" width="37" height="4.0" rx="2.0" fill="#12261e"/>
<rect x="521.1" y="454.5" width="37" height="3.0" rx="1.5" fill="#50401e"/>
<rect x="521.1" y="460.0" width="37" height="5.0" rx="2.5" fill="#1e3a2c"/>
<rect x="521.1" y="476.0" width="37" height="4.0" rx="2.0" fill="#2e2818"/>
<rect x="521.1" y="484.5" width="37" height="7.0" rx="3.5" fill="#081a36"/>
<rect x="521.1" y="493.0" width="37" height="4.0" rx="2.0" fill="#1e3a2c"/>
<rect x="521.1" y="501.5" width="37" height="7.0" rx="3.5" fill="#081a34"/>
<rect x="521.1" y="510.0" width="37" height="4.0" rx="2.0" fill="#1a3426"/>
<rect x="521.1" y="518.5" width="37" height="5.0" rx="2.5" fill="#082048"/>
<rect x="521.1" y="526.0" width="37" height="3.0" rx="1.5" fill="#301210"/>
<rect x="617.5" y="264.5" width="37" height="5.0" rx="2.5" fill="#701812"/>
<rect x="617.5" y="274.5" width="37" height="13.0" rx="5.0" fill="#7c1c14"/>
<rect x="617.5" y="290.0" width="37" height="12.0" rx="5.0" fill="#141430"/>
<rect x="617.5" y="304.0" width="37" height="10.0" rx="5.0" fill="#0c1228"/>
<rect x="617.5" y="317.0" width="37" height="10.0" rx="5.0" fill="#137ca4"/>
<rect x="617.5" y="331.0" width="37" height="6.0" rx="3.0" fill="#0c161e"/>
<rect x="617.5" y="343.0" width="37" height="8.0" rx="4.0" fill="#157e8c"/>
<rect x="617.5" y="362.0" width="37" height="10.0" rx="5.0" fill="#141e18"/>
<rect x="617.5" y="380.0" width="37" height="9.0" rx="4.5" fill="#b89020"/>
<rect x="617.5" y="395.0" width="37" height="10.0" rx="5.0" fill="#1a5cb8"/>
<rect x="617.5" y="412.5" width="37" height="7.0" rx="3.5" fill="#13606c"/>
<rect x="617.5" y="426.5" width="37" height="5.0" rx="2.5" fill="#166e94"/>
<rect x="617.5" y="445.0" width="37" height="4.0" rx="2.0" fill="#12261e"/>
<rect x="617.5" y="454.5" width="37" height="3.0" rx="1.5" fill="#50401e"/>
<rect x="617.5" y="460.0" width="37" height="5.0" rx="2.5" fill="#1e3a2c"/>
<rect x="617.5" y="476.0" width="37" height="4.0" rx="2.0" fill="#2e2818"/>
<rect x="617.5" y="484.5" width="37" height="7.0" rx="3.5" fill="#081a36"/>
<rect x="617.5" y="493.0" width="37" height="4.0" rx="2.0" fill="#1e3a2c"/>
<rect x="617.5" y="501.5" width="37" height="7.0" rx="3.5" fill="#081a34"/>
<rect x="617.5" y="510.0" width="37" height="4.0" rx="2.0" fill="#1a3426"/>
<rect x="617.5" y="518.5" width="37" height="5.0" rx="2.5" fill="#082048"/>
<rect x="617.5" y="526.0" width="37" height="3.0" rx="1.5" fill="#301210"/>
<rect x="713.9" y="264.5" width="37" height="5.0" rx="2.5" fill="#701812"/>
<rect x="713.9" y="274.5" width="37" height="13.0" rx="5.0" fill="#7c1c14"/>
<rect x="713.9" y="290.0" width="37" height="12.0" rx="5.0" fill="#141430"/>
<rect x="713.9" y="304.0" width="37" height="10.0" rx="5.0" fill="#0c1228"/>
<rect x="713.9" y="317.0" width="37" height="10.0" rx="5.0" fill="#137ca4"/>
<rect x="713.9" y="331.0" width="37" height="6.0" rx="3.0" fill="#0c161e"/>
<rect x="713.9" y="343.0" width="37" height="8.0" rx="4.0" fill="#157e8c"/>
<rect x="713.9" y="362.0" width="37" height="10.0" rx="5.0" fill="#141e18"/>
<rect x="713.9" y="380.0" width="37" height="9.0" rx="4.5" fill="#b89020"/>
<rect x="713.9" y="395.0" width="37" height="10.0" rx="5.0" fill="#1a5cb8"/>
<rect x="713.9" y="412.5" width="37" height="7.0" rx="3.5" fill="#13606c"/>
<rect x="713.9" y="426.5" width="37" height="5.0" rx="2.5" fill="#166e94"/>
<rect x="713.9" y="445.0" width="37" height="4.0" rx="2.0" fill="#12261e"/>
<rect x="713.9" y="454.5" width="37" height="3.0" rx="1.5" fill="#50401e"/>
<rect x="713.9" y="460.0" width="37" height="5.0" rx="2.5" fill="#1e3a2c"/>
<rect x="713.9" y="476.0" width="37" height="4.0" rx="2.0" fill="#2e2818"/>
<rect x="713.9" y="484.5" width="37" height="7.0" rx="3.5" fill="#081a36"/>
<rect x="713.9" y="493.0" width="37" height="4.0" rx="2.0" fill="#1e3a2c"/>
<rect x="713.9" y="501.5" width="37" height="7.0" rx="3.5" fill="#081a34"/>
<rect x="713.9" y="510.0" width="37" height="4.0" rx="2.0" fill="#1a3426"/>
<rect x="713.9" y="518.5" width="37" height="5.0" rx="2.5" fill="#082048"/>
<rect x="713.9" y="526.0" width="37" height="3.0" rx="1.5" fill="#301210"/>
<rect x="954.9" y="264.5" width="37" height="5.0" rx="2.5" fill="#701812"/>
<rect x="954.9" y="274.5" width="37" height="13.0" rx="5.0" fill="#7c1c14"/>
<rect x="954.9" y="290.0" width="37" height="12.0" rx="5.0" fill="#141430"/>
<rect x="954.9" y="304.0" width="37" height="10.0" rx="5.0" fill="#0c1228"/>
<rect x="954.9" y="317.0" width="37" height="10.0" rx="5.0" fill="#137ca4"/>
<rect x="954.9" y="331.0" width="37" height="6.0" rx="3.0" fill="#0c161e"/>
<rect x="954.9" y="343.0" width="37" height="8.0" rx="4.0" fill="#157e8c"/>
<rect x="954.9" y="362.0" width="37" height="10.0" rx="5.0" fill="#141e18"/>
<rect x="954.9" y="380.0" width="37" height="9.0" rx="4.5" fill="#b89020"/>
<rect x="954.9" y="395.0" width="37" height="10.0" rx="5.0" fill="#1a5cb8"/>
<rect x="954.9" y="412.5" width="37" height="7.0" rx="3.5" fill="#13606c"/>
<rect x="954.9" y="426.5" width="37" height="5.0" rx="2.5" fill="#166e94"/>
<rect x="954.9" y="445.0" width="37" height="4.0" rx="2.0" fill="#12261e"/>
<rect x="954.9" y="454.5" width="37" height="3.0" rx="1.5" fill="#50401e"/>
<rect x="954.9" y="460.0" width="37" height="5.0" rx="2.5" fill="#1e3a2c"/>
<rect x="954.9" y="476.0" width="37" height="4.0" rx="2.0" fill="#2e2818"/>
<rect x="954.9" y="484.5" width="37" height="7.0" rx="3.5" fill="#081a36"/>
<rect x="954.9" y="493.0" width="37" height="4.0" rx="2.0" fill="#1e3a2c"/>
<rect x="954.9" y="501.5" width="37" height="7.0" rx="3.5" fill="#081a34"/>
<rect x="954.9" y="510.0" width="37" height="4.0" rx="2.0" fill="#1a3426"/>
<rect x="954.9" y="518.5" width="37" height="5.0" rx="2.5" fill="#082048"/>
<rect x="954.9" y="526.0" width="37" height="3.0" rx="1.5" fill="#301210"/>
<rect x="472.9" y="263.0" width="37" height="6.0" rx="3.0" fill="#8a1410"/>
<rect x="472.9" y="273.0" width="37" height="10.0" rx="5.0" fill="#24100e"/>
<rect x="472.9" y="285.0" width="37" height="14.0" rx="5.0" fill="#1a0e10"/>
<rect x="472.9" y="307.0" width="37" height="6.0" rx="3.0" fill="#0c1428"/>
<rect x="472.9" y="315.5" width="37" height="11.0" rx="5.0" fill="#16b0ea"/>
<rect x="472.9" y="332.0" width="37" height="6.0" rx="3.0" fill="#1c2a20"/>
<rect x="472.9" y="344.0" width="37" height="8.0" rx="4.0" fill="#10141a"/>
<rect x="472.9" y="362.0" width="37" height="10.0" rx="5.0" fill="#3a5034"/>
<rect x="472.9" y="380.0" width="37" height="8.0" rx="4.0" fill="#0e1612"/>
<rect x="472.9" y="393.5" width="37" height="5.0" rx="2.5" fill="#1a2a20"/>
<rect x="472.9" y="403.5" width="37" height="5.0" rx="2.5" fill="#0c1418"/>
<rect x="472.9" y="416.0" width="37" height="6.0" rx="3.0" fill="#3a5a40"/>
<rect x="472.9" y="426.5" width="37" height="5.0" rx="2.5" fill="#1a6a90"/>
<rect x="472.9" y="433.0" width="37" height="5.0" rx="2.5" fill="#3a5a40"/>
<rect x="472.9" y="444.5" width="37" height="5.0" rx="2.5" fill="#0e1a22"/>
<rect x="472.9" y="460.0" width="37" height="9.0" rx="4.5" fill="#5a8a5a"/>
<rect x="472.9" y="482.0" width="37" height="8.0" rx="4.0" fill="#0a3a6a"/>
<rect x="472.9" y="492.0" width="37" height="6.0" rx="3.0" fill="#4a6a4a"/>
<rect x="472.9" y="504.5" width="37" height="8.0" rx="4.0" fill="#1a4ad0"/>
<rect x="472.9" y="517.0" width="37" height="6.0" rx="3.0" fill="#0a2a5a"/>
<rect x="472.9" y="526.0" width="37" height="3.0" rx="1.5" fill="#3a1410"/>
<rect x="569.3" y="264.5" width="37" height="5.0" rx="2.5" fill="#6a1610"/>
<rect x="569.3" y="277.0" width="37" height="10.0" rx="5.0" fill="#5a1412"/>
<rect x="569.3" y="296.0" width="37" height="8.0" rx="4.0" fill="#0c1a40"/>
<rect x="569.3" y="317.5" width="37" height="9.0" rx="4.5" fill="#1a9ac8"/>
<rect x="569.3" y="417.0" width="37" height="4.0" rx="2.0" fill="#1a2a20"/>
<rect x="569.3" y="425.0" width="37" height="8.0" rx="4.0" fill="#1aa0d0"/>
<rect x="569.3" y="444.5" width="37" height="5.0" rx="2.5" fill="#18302a"/>
<rect x="569.3" y="459.0" width="37" height="6.0" rx="3.0" fill="#1a3a2a"/>
<rect x="569.3" y="475.0" width="37" height="6.0" rx="3.0" fill="#0a1a2a"/>
<rect x="569.3" y="491.5" width="37" height="8.0" rx="4.0" fill="#6a9a6a"/>
<rect x="569.3" y="503.0" width="37" height="4.0" rx="2.0" fill="#0a1a30"/>
<rect x="569.3" y="510.2" width="37" height="2.5" rx="1.2" fill="#50785a"/>
<rect x="569.3" y="517.2" width="37" height="2.5" rx="1.2" fill="#50785a"/>
<rect x="569.3" y="523.0" width="37" height="3.0" rx="1.5" fill="#0a3a7a"/>
<rect x="762.1" y="267.5" width="37" height="5.0" rx="2.5" fill="#4a1210"/>
<rect x="762.1" y="410.0" width="37" height="6.0" rx="3.0" fill="#0a1a3a"/>
<rect x="762.1" y="427.5" width="37" height="5.0" rx="2.5" fill="#0a3a5a"/>
<rect x="762.1" y="444.0" width="37" height="4.0" rx="2.0" fill="#142a20"/>
<rect x="762.1" y="460.0" width="37" height="4.0" rx="2.0" fill="#142a20"/>
<rect x="762.1" y="490.5" width="37" height="6.0" rx="3.0" fill="#2a4a3a"/>
<rect x="762.1" y="508.5" width="37" height="5.0" rx="2.5" fill="#2a4a3a"/>
<rect x="762.1" y="516.0" width="37" height="4.0" rx="2.0" fill="#142a24"/>
<rect x="810.3" y="265.0" width="37" height="6.0" rx="3.0" fill="#921410"/>
<rect x="810.3" y="275.0" width="37" height="10.0" rx="5.0" fill="#2a1010"/>
<rect x="810.3" y="291.5" width="37" height="9.0" rx="4.5" fill="#1a6a90"/>
<rect x="810.3" y="305.0" width="37" height="8.0" rx="4.0" fill="#0a1a2a"/>
<rect x="810.3" y="316.0" width="37" height="13.0" rx="5.0" fill="#10c2f2"/>
<rect x="810.3" y="332.0" width="37" height="6.0" rx="3.0" fill="#1a2a24"/>
<rect x="810.3" y="346.0" width="37" height="8.0" rx="4.0" fill="#10161a"/>
<rect x="810.3" y="363.0" width="37" height="10.0" rx="5.0" fill="#3a5a3a"/>
<rect x="810.3" y="381.0" width="37" height="6.0" rx="3.0" fill="#101a16"/>
<rect x="810.3" y="396.0" width="37" height="6.0" rx="3.0" fill="#1a3a2a"/>
<rect x="810.3" y="413.0" width="37" height="6.0" rx="3.0" fill="#3a5a40"/>
<rect x="810.3" y="427.5" width="37" height="6.0" rx="3.0" fill="#1a80a0"/>
<rect x="810.3" y="434.5" width="37" height="5.0" rx="2.5" fill="#3a5a40"/>
<rect x="810.3" y="445.0" width="37" height="8.0" rx="4.0" fill="#0a2a5a"/>
<rect x="810.3" y="462.5" width="37" height="9.0" rx="4.5" fill="#4a7a50"/>
<rect x="810.3" y="477.0" width="37" height="6.0" rx="3.0" fill="#101a20"/>
<rect x="810.3" y="494.0" width="37" height="6.0" rx="3.0" fill="#3a5a40"/>
<rect x="810.3" y="506.0" width="37" height="8.0" rx="4.0" fill="#1a40c0"/>
<rect x="810.3" y="517.5" width="37" height="5.0" rx="2.5" fill="#0a2a5a"/>
<rect x="810.3" y="526.5" width="37" height="3.0" rx="1.5" fill="#4a1410"/>
<rect x="858.5" y="267.5" width="37" height="5.0" rx="2.5" fill="#5a1412"/>
<rect x="858.5" y="275.0" width="37" height="10.0" rx="5.0" fill="#2a1010"/>
<rect x="858.5" y="319.0" width="37" height="6.0" rx="3.0" fill="#0a4a6a"/>
<rect x="858.5" y="445.0" width="37" height="4.0" rx="2.0" fill="#1a3a2a"/>
<rect x="858.5" y="491.5" width="37" height="7.0" rx="3.5" fill="#1a4a9a"/>
<rect x="858.5" y="508.5" width="37" height="8.0" rx="4.0" fill="#8ac08a"/>
<rect x="858.5" y="520.5" width="37" height="7.0" rx="3.5" fill="#0a4a6a"/>
<rect x="906.7" y="267.5" width="37" height="5.0" rx="2.5" fill="#6a1a1a"/>
<rect x="906.7" y="278.0" width="37" height="10.0" rx="5.0" fill="#3a1212"/>
<rect x="906.7" y="318.0" width="37" height="9.0" rx="4.5" fill="#1a90c0"/>
<rect x="906.7" y="417.5" width="37" height="5.0" rx="2.5" fill="#0a3a4a"/>
<rect x="906.7" y="429.5" width="37" height="5.0" rx="2.5" fill="#0a3a4a"/>
<rect x="906.7" y="444.5" width="37" height="6.0" rx="3.0" fill="#5a7a5a"/>
<rect x="906.7" y="455.0" width="37" height="4.0" rx="2.0" fill="#5a4a2a"/>
<rect x="906.7" y="509.3" width="37" height="9.0" rx="4.5" fill="#8ab88a"/>
<rect x="906.7" y="520.5" width="37" height="7.0" rx="3.5" fill="#0a4a6a"/>
</g>
<circle cx="584.7" cy="206.1" r="0.6" fill="#1a4a9a" opacity="0.57"/><circle cx="619.9" cy="167.2" r="0.6" fill="#1a6a8a" opacity="0.52"/><circle cx="370.8" cy="180.9" r="0.6" fill="#3a3a1a" opacity="0.58"/><circle cx="1109.8" cy="406.6" r="0.9" fill="#1a4a9a" opacity="0.50"/><circle cx="1134.0" cy="162.5" r="0.8" fill="#1a6a8a" opacity="0.37"/><circle cx="411.2" cy="271.9" r="0.7" fill="#1a6a8a" opacity="0.59"/><circle cx="470.2" cy="183.7" r="0.9" fill="#1a4a9a" opacity="0.61"/><circle cx="730.0" cy="365.3" r="0.9" fill="#2a5aaa" opacity="0.76"/><circle cx="616.5" cy="246.8" r="1.0" fill="#1a6a8a" opacity="0.42"/><circle cx="795.7" cy="362.5" r="1.0" fill="#2a5aaa" opacity="0.44"/><circle cx="1137.3" cy="192.4" r="0.7" fill="#3a3a1a" opacity="0.47"/><circle cx="1097.8" cy="319.3" r="1.1" fill="#1a4a9a" opacity="0.59"/><circle cx="1049.2" cy="274.1" r="1.0" fill="#2a5aaa" opacity="0.59"/><circle cx="696.1" cy="494.1" r="0.9" fill="#2a5aaa" opacity="0.63"/><circle cx="363.1" cy="436.2" r="0.8" fill="#3a3a1a" opacity="0.49"/><circle cx="875.0" cy="152.4" r="0.8" fill="#3a3a1a" opacity="0.61"/><circle cx="727.7" cy="234.2" r="0.7" fill="#2a5aaa" opacity="0.42"/><circle cx="641.2" cy="507.3" r="0.7" fill="#1a4a9a" opacity="0.50"/><circle cx="545.9" cy="200.2" r="1.1" fill="#3a3a1a" opacity="0.44"/><circle cx="661.7" cy="293.0" r="1.2" fill="#3a3a1a" opacity="0.38"/><circle cx="460.4" cy="240.0" r="0.6" fill="#1a6a8a" opacity="0.72"/><circle cx="465.5" cy="260.8" r="0.9" fill="#1a6a8a" opacity="0.48"/><circle cx="788.9" cy="541.4" r="0.9" fill="#1a4a9a" opacity="0.74"/><circle cx="1113.5" cy="427.5" r="0.8" fill="#3a3a1a" opacity="0.50"/><circle cx="717.4" cy="310.4" r="0.6" fill="#1a6a8a" opacity="0.40"/><circle cx="448.7" cy="285.1" r="0.7" fill="#1a4a9a" opacity="0.58"/><circle cx="763.8" cy="539.7" r="0.6" fill="#1a4a9a" opacity="0.40"/><circle cx="628.8" cy="408.2" r="1.0" fill="#2a5aaa" opacity="0.54"/><circle cx="409.1" cy="347.0" r="0.9" fill="#3a3a1a" opacity="0.46"/><circle cx="433.3" cy="456.4" r="0.9" fill="#2a5aaa" opacity="0.65"/><circle cx="746.8" cy="228.8" r="0.7" fill="#2a5aaa" opacity="0.57"/><circle cx="334.8" cy="363.7" r="1.0" fill="#1a4a9a" opacity="0.43"/><circle cx="620.8" cy="212.8" r="0.9" fill="#1a6a8a" opacity="0.69"/><circle cx="589.6" cy="236.2" r="1.1" fill="#1a6a8a" opacity="0.71"/><circle cx="935.0" cy="237.8" r="0.8" fill="#3a3a1a" opacity="0.31"/><circle cx="335.5" cy="259.8" r="0.7" fill="#2a5aaa" opacity="0.60"/><circle cx="601.9" cy="481.0" r="1.2" fill="#2a5aaa" opacity="0.48"/><circle cx="497.6" cy="237.8" r="0.8" fill="#1a6a8a" opacity="0.54"/><circle cx="1141.6" cy="398.1" r="0.9" fill="#1a4a9a" opacity="0.63"/><circle cx="985.3" cy="178.4" r="1.1" fill="#1a4a9a" opacity="0.69"/><circle cx="943.6" cy="342.8" r="0.9" fill="#1a6a8a" opacity="0.62"/><circle cx="385.0" cy="538.5" r="0.9" fill="#3a3a1a" opacity="0.67"/><circle cx="383.5" cy="209.4" r="0.6" fill="#1a6a8a" opacity="0.60"/><circle cx="703.8" cy="417.1" r="1.0" fill="#3a3a1a" opacity="0.48"/><circle cx="774.0" cy="197.8" r="1.1" fill="#1a4a9a" opacity="0.66"/><circle cx="398.5" cy="456.3" r="0.9" fill="#1a6a8a" opacity="0.74"/><circle cx="1007.6" cy="231.2" r="0.7" fill="#2a5aaa" opacity="0.55"/><circle cx="955.0" cy="279.3" r="1.1" fill="#3a3a1a" opacity="0.33"/><circle cx="935.0" cy="518.2" r="1.1" fill="#3a3a1a" opacity="0.74"/><circle cx="422.1" cy="206.5" r="1.1" fill="#1a4a9a" opacity="0.69"/><circle cx="824.4" cy="467.4" r="0.7" fill="#1a6a8a" opacity="0.54"/><circle cx="922.6" cy="375.6" r="1.0" fill="#2a5aaa" opacity="0.57"/><circle cx="718.3" cy="467.6" r="0.7" fill="#1a4a9a" opacity="0.44"/><circle cx="962.2" cy="355.2" r="1.1" fill="#1a4a9a" opacity="0.76"/><circle cx="685.2" cy="399.0" r="1.0" fill="#1a6a8a" opacity="0.53"/><circle cx="761.0" cy="342.8" r="1.0" fill="#1a6a8a" opacity="0.74"/><circle cx="1105.3" cy="251.5" r="1.1" fill="#1a6a8a" opacity="0.37"/><circle cx="414.4" cy="327.8" r="1.0" fill="#1a4a9a" opacity="0.51"/><circle cx="491.1" cy="269.6" r="1.1" fill="#1a4a9a" opacity="0.38"/><circle cx="915.0" cy="419.0" r="0.8" fill="#1a6a8a" opacity="0.37"/><circle cx="705.8" cy="455.1" r="0.8" fill="#1a4a9a" opacity="0.54"/><circle cx="1145.5" cy="491.0" r="1.0" fill="#1a6a8a" opacity="0.80"/><circle cx="652.0" cy="319.1" r="0.8" fill="#2a5aaa" opacity="0.66"/><circle cx="328.4" cy="374.6" r="1.0" fill="#3a3a1a" opacity="0.49"/><circle cx="747.7" cy="266.5" r="0.7" fill="#1a4a9a" opacity="0.76"/><circle cx="504.4" cy="509.3" r="0.8" fill="#1a4a9a" opacity="0.32"/><circle cx="967.9" cy="256.0" r="1.1" fill="#1a6a8a" opacity="0.72"/><circle cx="881.2" cy="538.4" r="0.7" fill="#3a3a1a" opacity="0.76"/><circle cx="792.4" cy="435.8" r="0.8" fill="#1a4a9a" opacity="0.70"/><circle cx="466.4" cy="517.2" r="1.2" fill="#2a5aaa" opacity="0.62"/>
<rect x="310" y="556" width="846" height="7" fill="#061428" opacity="0.3"/><ellipse cx="480" cy="561" rx="150" ry="3" fill="#0a2a60" opacity="0.5" filter="url(#bl2)"/>
</svg>
<div class="a" style="left:1251px;top:125px;width:11px;height:452px;background:#f4f4f4"></div>
<div class="a" style="left:1253px;top:271px;width:8px;height:160px;background:#dcdcdc"></div>
<div class="a" style="left:1254px;top:130px;width:0;height:0;border-left:2.5px solid transparent;border-right:2.5px solid transparent;border-bottom:3.5px solid #111"></div>
<div class="a" style="left:1254px;top:571px;width:0;height:0;border-left:2.5px solid transparent;border-right:2.5px solid transparent;border-top:3.5px solid #111"></div>
<div class="a" style="left:212px;top:577px;width:1039px;height:12px;background:#f4f4f4"></div>
<div class="a" style="left:531px;top:578px;width:401px;height:9px;background:#dadada"></div>
<div class="a" style="left:215px;top:581px;width:0;height:0;border-top:2.5px solid transparent;border-bottom:2.5px solid transparent;border-right:3.5px solid #111"></div>
<div class="a" style="left:1244px;top:581px;width:0;height:0;border-top:2.5px solid transparent;border-bottom:2.5px solid transparent;border-left:3.5px solid #111"></div>
<div class="a" style="left:212px;top:589px;width:854px;height:29px;background:#f5f5f5;border:1px solid #e2e2e2"></div>
<div class="a" style="left:221px;top:594px;color:#222">Author: CAMAG Laboratory</div>
<div class="a" style="left:344px;top:594px;color:#222">Creation date: 17-Apr-2018 12:47:28</div>
<div class="a" style="left:505px;top:594px;color:#222"><i>R</i><span style="font-size:7px">F</span> Position: 0.000</div>
<div class="a" style="left:589.5px;top:594px;color:#222">Position: (157.4|101.9) mm</div>
<div class="a" style="left:712.5px;top:594px;color:#222">RGB: (5|0|0)</div>
<div class="a" style="left:798px;top:594px;color:#222">Contrast: 1.0</div>
<div class="a" style="left:862.5px;top:594px;color:#222">Exposure: 0.325 s</div>
<div class="a" style="left:946px;top:594px;color:#222">Camera gain: 1.00</div>
<div class="a" style="left:228.5px;top:605.5px;color:#222">White Balance: (1.00|1.00|1.00)</div>
<div class="a" style="left:783px;top:596px;width:5px;height:5px;border-radius:3px;background:#111"></div>
<div class="a" style="left:1070px;top:595px;width:16px;height:15px;background:#e2e2e2"></div>
<div class="a" style="left:1073px;top:601.5px;width:9px;height:2.5px;background:#6e6e6e"></div>
<div class="a" style="left:1088px;top:603px;width:97px;height:1px;background:#ababab"></div>
<svg class="a" style="left:1134px;top:597px" width="11" height="15" viewBox="0 0 11 15"><path d="M1 1 H10 V10 L5.5 14 L1 10 Z" fill="#e4e4e4" stroke="#c6c6c6" stroke-width="0.8"/></svg>
<div class="a" style="left:1190px;top:595px;width:15px;height:15px;background:#e2e2e2"></div>
<div class="a" style="left:1193px;top:601.5px;width:9px;height:2.5px;background:#6e6e6e"></div>
<div class="a" style="left:1196.3px;top:598px;width:2.5px;height:9px;background:#6e6e6e"></div>
<div class="a" style="left:1216px;top:599px;color:#222">167%</div>
<div class="a" style="left:1251px;top:602px;width:0;height:0;border-left:2.5px solid transparent;border-right:2.5px solid transparent;border-top:4px solid #999"></div>
<div class="a" style="left:1215px;top:610px;width:47px;height:1px;background:#dcdcdc"></div>
</body></html>
